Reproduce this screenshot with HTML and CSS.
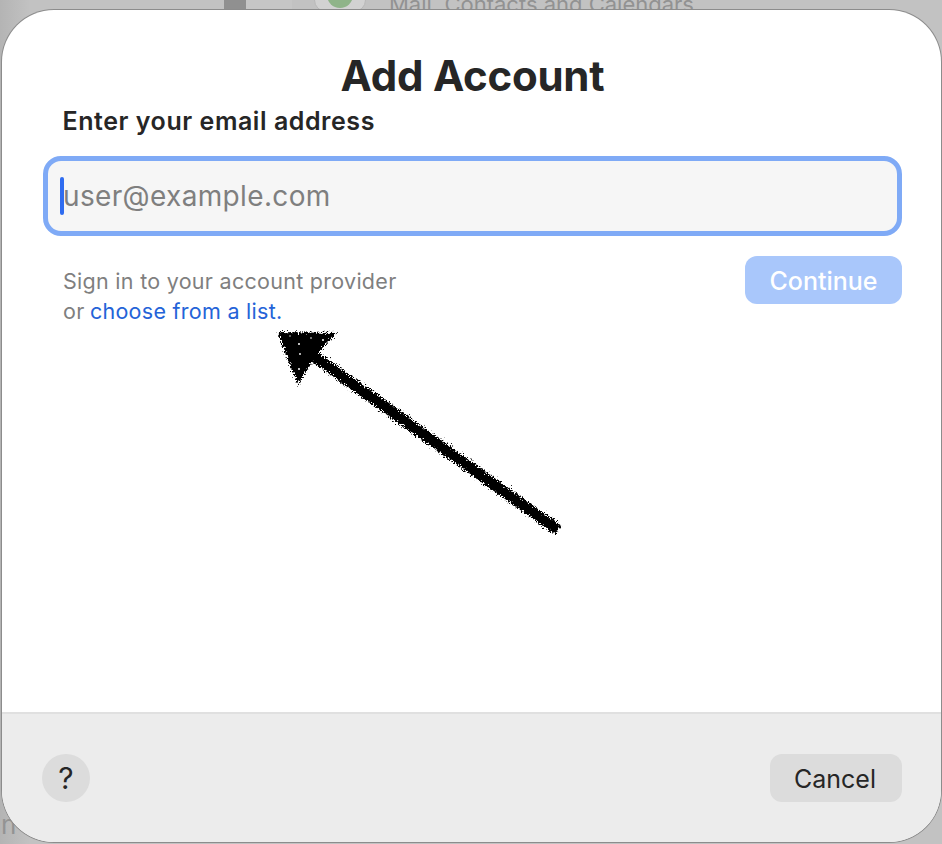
FILE: index.html
```html
<!DOCTYPE html>
<html lang="en">
<head>
<meta charset="utf-8">
<title>Add Account</title>
<link rel="stylesheet" href="styles.css">
</head>
<body>
<div class="backdrop">
  <div class="bd-bar"></div>
  <div class="bd-panel"></div>
  <div class="bd-icon"><div class="bd-icon-dot"></div></div>
  <div class="bd-text">Mail, Contacts and Calendars</div>
  <div class="bd-corner">n</div>
</div>
<main class="dialog">
  <section class="content">
    <h1 class="title">Add Account</h1>
    <h2 class="label">Enter your email address</h2>
    <div class="field"><span class="caret"></span><span class="placeholder">user@example.com</span></div>
    <div class="row">
      <p class="hint">Sign in to your account provider<br>or <a class="link" href="#">choose from a list.</a></p>
      <button class="btn-continue" type="button">Continue</button>
    </div>
  </section>
  <footer class="footer">
    <button class="btn-help" type="button">?</button>
    <button class="btn-cancel" type="button">Cancel</button>
  </footer>
  <svg class="arrow" width="320" height="230" viewBox="260 320 320 230" aria-hidden="true">
    <defs>
      <filter id="rough" x="-10%" y="-10%" width="120%" height="120%">
        <feTurbulence type="fractalNoise" baseFrequency="0.7" numOctaves="3" seed="7"/>
        <feDisplacementMap in="SourceGraphic" scale="9" xChannelSelector="R" yChannelSelector="G"/>
        <feGaussianBlur stdDeviation="0.4"/>
      </filter>
    </defs>
    <g filter="url(#rough)">
      <path d="M312 355 L558 530" stroke="#000" stroke-width="11" fill="none"/>
      <path d="M279 333 L334 334 L322 347 L311 361 L298 383 Z" fill="#000" stroke="#000" stroke-width="2"/>
    </g>
    <g class="specks">
      <circle cx="299" cy="344" r="1"/>
      <circle cx="300" cy="354" r="0.9"/>
      <circle cx="299" cy="369" r="1"/>
      <circle cx="323" cy="340" r="1"/>
      <circle cx="311" cy="338" r="0.8"/>
      <circle cx="290" cy="336" r="0.7"/>
    </g>
  </svg>
</main>
</body>
</html>
```
FILE: styles.css
```css
* { box-sizing: border-box; }
html, body { margin: 0; height: 844px; overflow: hidden; }
body {
  position: relative;
  padding: 10px 1px 2px 2px;
  font-family: Inter, "Liberation Sans", sans-serif;
  background: linear-gradient(90deg, #b4b4b4 0, #c2c2c2 30px, #c2c2c2 100%);
}
.backdrop { position: absolute; inset: 0; overflow: hidden; }
.bd-bar { position: absolute; left: 224px; top: 0; width: 22px; height: 10px; background: #909090; }
.bd-panel { position: absolute; left: 246px; top: 0; width: 46px; height: 10px; background: #c6c6c6; }
.bd-icon {
  position: absolute; left: 314px; top: -18px; width: 52px; height: 30px;
  border-radius: 12px; background: #d2d2d2; border: 1px solid #b8b8b8; overflow: hidden;
}
.bd-icon-dot { width: 26px; height: 26px; margin: -1px auto 0; border-radius: 50%; background: #8fb489; }
.bd-text { position: absolute; left: 389px; top: -9px; font-size: 22px; line-height: 26px; color: #929292; white-space: nowrap; }
.bd-corner { position: absolute; left: 1px; top: 810px; font-size: 26px; line-height: 30px; color: #939393; }
.dialog {
  position: relative;
  height: 832px;
  display: flex;
  flex-direction: column;
  background: #fff;
  border-radius: 52px;
  box-shadow: 0 0 0 1px #8c8c8c;
  overflow: hidden;
}
.content { flex: 1; padding: 0 39px 0 41px; display: flex; flex-direction: column; }
.title {
  margin: 40px 0 0;
  text-align: center;
  font-size: 42px;
  line-height: 51px;
  font-weight: 700;
  letter-spacing: -0.25px;
  color: #262626;
}
.label {
  margin: 0 0 0 19.5px;
  font-size: 25px;
  line-height: 40px;
  font-weight: 600;
  letter-spacing: 0.55px;
  color: #262626;
}
.field {
  margin-top: 15px;
  height: 80px;
  display: flex;
  align-items: center;
  padding-left: 12px;
  background: #f6f6f6;
  border: 5px solid #7faaf6;
  border-radius: 18px;
}
.caret { width: 4px; height: 38px; margin-right: -1px; border-radius: 2px; background: #2f6cf0; }
.placeholder { font-size: 28px; line-height: 34px; letter-spacing: 0.35px; color: #7f7f7f; }
.row { margin-top: 20px; display: flex; justify-content: space-between; align-items: flex-start; }
.hint { margin: 10px 0 0 20px; font-size: 21.5px; line-height: 30px; letter-spacing: 0.28px; color: #7f7f7f; }
.link { margin-left: -1px; color: #2463d8; text-decoration: none; }
.btn-continue {
  width: 157px; height: 48px; padding: 2px 0 0; border: 0; border-radius: 12px;
  background: #a9c7fb; color: #fff; font: 500 25px Inter, "Liberation Sans", sans-serif;
}
.footer {
  height: 130px;
  display: flex;
  justify-content: space-between;
  align-items: flex-start;
  padding: 40px 39px 0 40px;
  background: #ececec;
  border-top: 2px solid #e0e0e0;
}
.btn-help {
  width: 48px; height: 48px; padding: 0; border: 0; border-radius: 50%;
  background: #dcdcdc; color: #262626; font: 400 30px Inter, "Liberation Sans", sans-serif;
}
.btn-cancel {
  width: 132px; height: 48px; padding: 2px 2px 0 0; border: 0; border-radius: 12px;
  background: #dcdcdc; color: #262626; font: 400 25px Inter, "Liberation Sans", sans-serif;
}
.arrow { position: absolute; left: 258px; top: 310px; }
.specks { fill: #fff; }
```
